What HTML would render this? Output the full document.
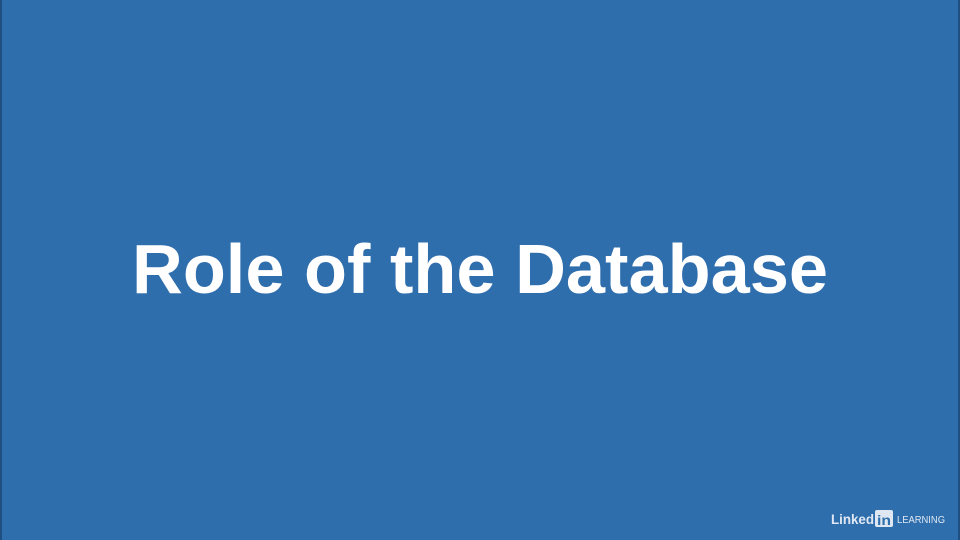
<!DOCTYPE html>
<html><head><meta charset="utf-8"><style>
html,body{margin:0;padding:0;}
body{width:960px;height:540px;background:#2f6ead;position:relative;overflow:hidden;}
.l{position:absolute;left:0;top:0;width:2px;height:540px;background:#1f4f80;}
.r{position:absolute;right:0;top:0;width:2px;height:540px;background:#1f4f80;}
</style></head><body>
<div class="l"></div><div class="r"></div>
<svg width="960" height="540" style="position:absolute;left:0;top:0">
<text x="132" y="293" font-family="Liberation Sans, sans-serif" font-weight="bold" font-size="70" fill="#fff" textLength="696" lengthAdjust="spacingAndGlyphs">Role of the Database</text>
<text x="831" y="524" font-family="Liberation Sans, sans-serif" font-weight="bold" font-size="14" fill="#dfe8f2" textLength="43" lengthAdjust="spacingAndGlyphs">Linked</text>
<rect x="875" y="510" width="18" height="17" rx="2" fill="#dfe8f2"/>
<text x="877" y="525" font-family="Liberation Sans, sans-serif" font-weight="bold" font-size="14" fill="#2f6ead" textLength="14" lengthAdjust="spacingAndGlyphs">in</text>
<text x="897" y="523" font-family="Liberation Sans, sans-serif" font-size="10" fill="#dfe8f2" textLength="48" lengthAdjust="spacingAndGlyphs">LEARNING</text>
</svg>
</body></html>
